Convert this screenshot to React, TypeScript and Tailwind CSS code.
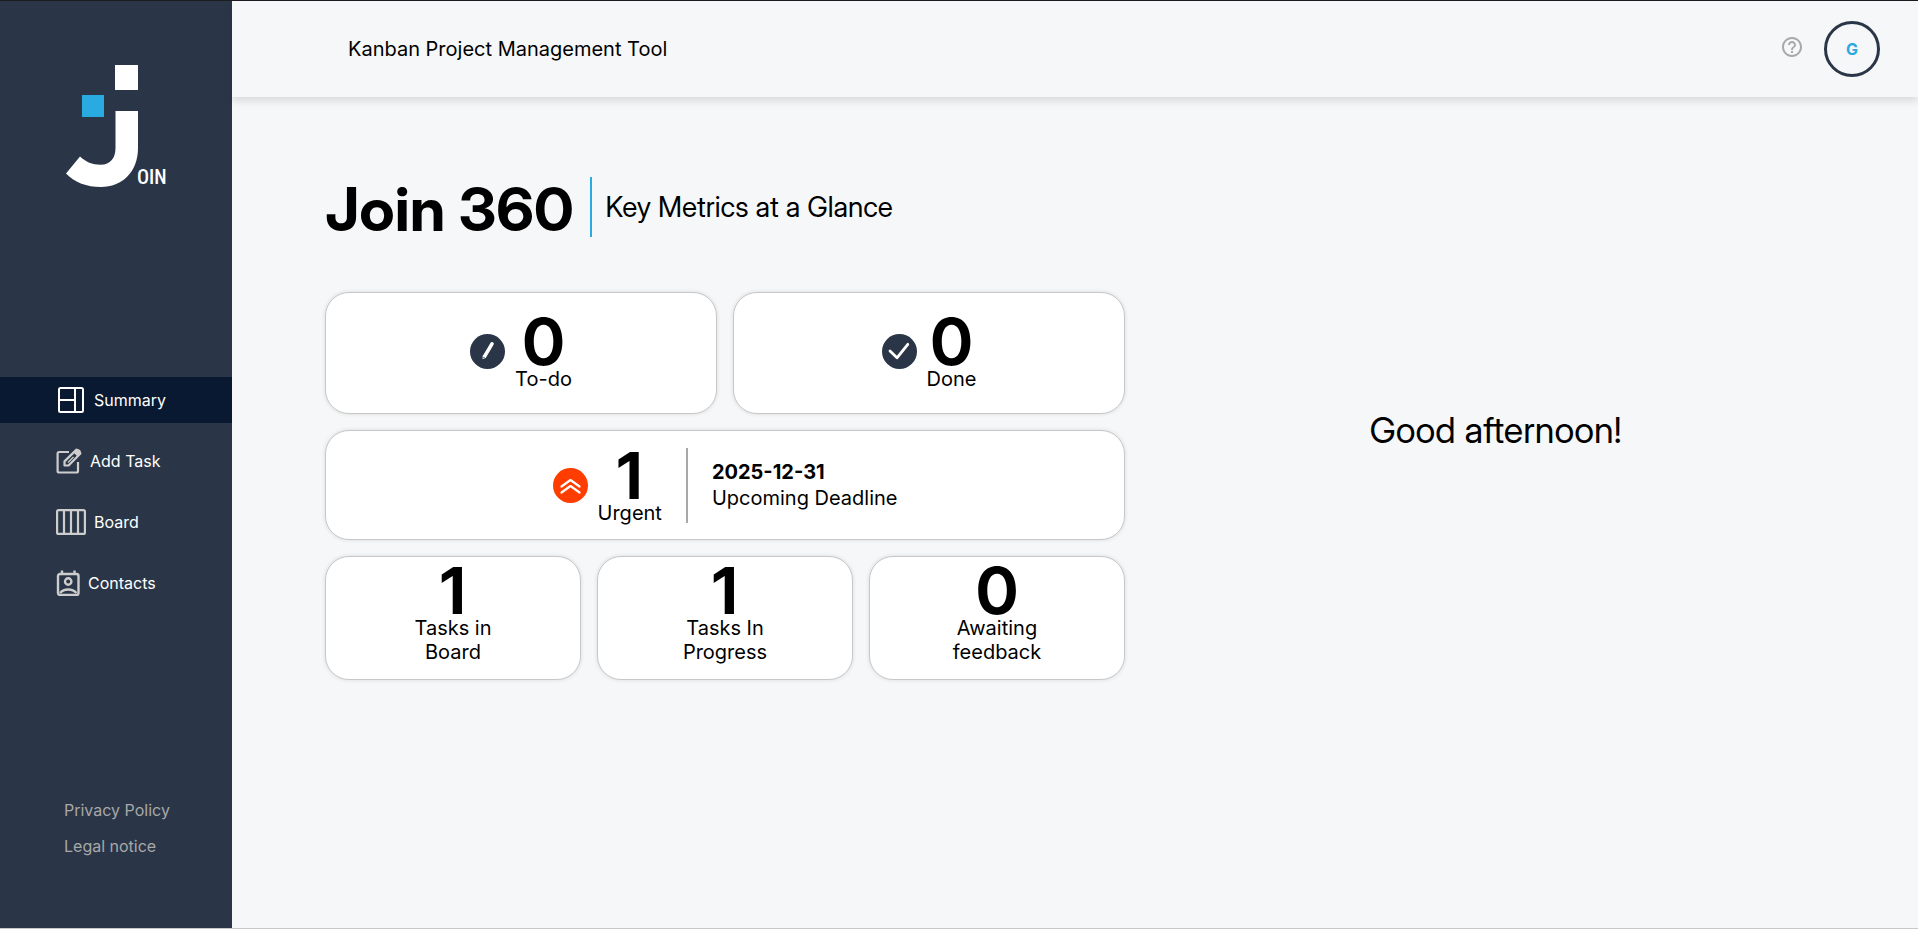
import type { ReactNode } from "react";

function Logo() {
  return (
    <svg width="104" height="124" viewBox="65 64 104 124" role="img" aria-label="Join">
      <rect x="115" y="65" width="23" height="25" fill="#fff" />
      <rect x="82" y="95" width="22" height="22" fill="#29abe2" />
      <path
        d="M115.5 111H138V148C138 172 122 187 101 187C86.500 187 75 182.500 66 173.500L80 156.500C86 162 92 164.700 100.500 164.700C110.500 164.700 115.500 158 115.500 148Z"
        fill="#fff"
      />
      <text x="137" y="184" fill="#fff" className="font-['Roboto_Condensed','Roboto',sans-serif] text-[20px] font-medium">
        OIN
      </text>
    </svg>
  );
}

function SummaryIcon() {
  return (
    <svg width="26" height="26" viewBox="0 0 26 26" fill="none" stroke="#fff" strokeWidth="2">
      <rect x="1" y="1" width="24" height="24" rx="1.500" />
      <path d="M17 1V25M1 13H17" />
    </svg>
  );
}

function AddTaskIcon() {
  return (
    <svg width="26" height="26" viewBox="0 0 26 26" fill="none" stroke="#cdcdcd" strokeWidth="2.200">
      <path d="M13 4H3.200Q1.600 4 1.600 5.600V23Q1.600 24.500 3.200 24.500H20.400Q22 24.500 22 23V14" />
      <path d="M8.500 17.500V13.400L20.500 1.600L24.400 5.500L12.600 17.500Z" strokeLinejoin="round" />
      <path d="M17.500 4.500L20.500 1.500Q22 .3 23.500 1.800L24.500 2.800Q25.800 4.200 24.500 5.500L21.500 8.500Z" fill="#cdcdcd" stroke="none" />
      <path d="M12 14.500L17.500 9" strokeWidth="1.200" />
    </svg>
  );
}

function BoardIcon() {
  return (
    <svg width="30" height="26" viewBox="0 0 30 26" fill="none" stroke="#cdcdcd" strokeWidth="2.200">
      <rect x="1.100" y="1.100" width="27.800" height="23.800" rx="1.500" />
      <path d="M8 1V25M15 1V25M22 1V25" />
    </svg>
  );
}

function ContactsIcon() {
  return (
    <svg width="24" height="26" viewBox="0 0 24 26" fill="none" stroke="#cdcdcd" strokeWidth="2.400">
      <rect x="2" y="4" width="20.500" height="21" rx="2" />
      <path d="M6 .5V4M18.500 .5V4" />
      <circle cx="12.200" cy="11.500" r="3.200" />
      <path d="M4 23Q7 19.500 12.200 19.500T20.500 23" />
    </svg>
  );
}

function HelpIcon() {
  return (
    <svg width="24" height="24" viewBox="0 0 24 24" fill="#a8a8a8">
      <path d="M11 18h2v-2h-2v2zm1-16C6.480 2 2 6.480 2 12s4.480 10 10 10 10-4.480 10-10S17.520 2 12 2zm0 18c-4.410 0-8-3.590-8-8s3.590-8 8-8 8 3.590 8 8-3.590 8-8 8zm0-14c-2.210 0-4 1.790-4 4h2c0-1.100.9-2 2-2s2 .9 2 2c0 2-3 1.750-3 5h2c0-2.250 3-2.500 3-5 0-2.210-1.790-4-4-4z" />
    </svg>
  );
}

function PencilBadge() {
  return (
    <svg width="35" height="35" viewBox="0 0 35 35">
      <circle cx="17.500" cy="17.500" r="17.500" fill="#2a3647" />
      <path d="M22 9.800L14.600 22.400" stroke="#fff" strokeWidth="3.600" strokeLinecap="round" />
      <path d="M12.800 21.300L16.200 23.300L12.600 25.300Z" fill="#fff" />
      <circle cx="14" cy="23.400" r=".6" fill="#2a3647" />
    </svg>
  );
}

function CheckBadge() {
  return (
    <svg width="35" height="35" viewBox="0 0 35 35">
      <circle cx="17.500" cy="17.500" r="17.500" fill="#2a3647" />
      <path
        d="M8 17L15 23.800L25.800 10.300"
        fill="none"
        stroke="#fff"
        strokeWidth="2.800"
        strokeLinecap="round"
        strokeLinejoin="round"
      />
    </svg>
  );
}

function UrgentBadge() {
  return (
    <svg width="35" height="35" viewBox="0 0 35 35">
      <circle cx="17.500" cy="17.500" r="17.500" fill="#ff3d00" />
      <path
        d="M8.500 18.500L17.500 12L26.500 18.500M8.500 24.500L17.500 18L26.500 24.500"
        fill="none"
        stroke="#fff"
        strokeWidth="2.200"
        strokeLinecap="round"
        strokeLinejoin="round"
      />
    </svg>
  );
}

function NavItem({ icon, label, active = false }: { icon: ReactNode; label: string; active?: boolean }) {
  return (
    <a
      href="#"
      aria-current={active ? "page" : undefined}
      className={
        active
          ? "flex h-[46px] items-center gap-2.5 bg-[#091931] pl-[58px]"
          : "flex h-[46px] items-center gap-2 pl-14"
      }
    >
      {icon}
      <span>{label}</span>
    </a>
  );
}

function Metric({ value, label }: { value: number; label: string }) {
  return (
    <div className="flex flex-col items-center text-center">
      <span className="font-['Inter_Display','Inter',sans-serif] text-[64px] leading-[51px] font-bold">{value}</span>
      <span className="text-xl leading-6">{label}</span>
    </div>
  );
}

function Card({ className, children }: { className: string; children: ReactNode }) {
  return (
    <button
      type="button"
      className={`flex justify-center rounded-3xl border border-[#c8c8c8] bg-white shadow-[0_0_4px_rgba(0,0,0,0.12)] ${className}`}
    >
      {children}
    </button>
  );
}

export default function App() {
  return (
    <div className="flex min-h-screen border-t border-b border-t-[#1c1b22] border-b-[#c8c8c8] bg-[#f6f7f8] font-['Inter_Variable','Inter',sans-serif] text-black">
      <aside className="flex w-[232px] shrink-0 flex-col bg-[#2a3647] text-base leading-5 text-white">
        <div className="pt-[63px] pl-[65px]">
          <Logo />
        </div>
        <nav className="mt-[189px] flex flex-col gap-[15px]">
          <NavItem icon={<SummaryIcon />} label="Summary" active />
          <NavItem icon={<AddTaskIcon />} label="Add Task" />
          <NavItem icon={<BoardIcon />} label="Board" />
          <NavItem icon={<ContactsIcon />} label="Contacts" />
        </nav>
        <div className="mt-auto flex flex-col gap-4 pb-[72px] pl-16 text-[#a8a8a8]">
          <a href="#">Privacy Policy</a>
          <a href="#">Legal notice</a>
        </div>
      </aside>

      <div className="flex grow flex-col">
        <header className="flex h-24 items-center justify-between pr-[38px] pl-[116px] shadow-[0_4px_8px_rgba(0,0,0,0.12)]">
          <span className="text-xl leading-6">Kanban Project Management Tool</span>
          <div className="flex items-center gap-5">
            <a href="#" aria-label="Help" className="pb-1">
              <HelpIcon />
            </a>
            <button
              type="button"
              className="size-14 rounded-full border-3 border-[#2a3647] text-base font-bold text-[#29abe2]"
            >
              G
            </button>
          </div>
        </header>

        <main className="flex items-start pt-20 pr-[52px] pl-[93px]">
          <section className="w-[800px] shrink-0">
            <div className="flex h-[60px] items-center font-['Inter_Display','Inter',sans-serif]">
              <h1 className="pt-1 text-[61px] leading-[60px] font-bold">Join 360</h1>
              <div className="ml-4 h-full w-0.5 bg-[#29abe2]" />
              <h2 className="ml-[14px] text-[28px] leading-8">Key Metrics at a Glance</h2>
            </div>

            <div className="mt-[55px] flex flex-col gap-4">
              <div className="grid grid-cols-2 gap-4">
                <Card className="h-[122px] items-center gap-[10px]">
                  <div className="pb-1">
                    <PencilBadge />
                  </div>
                  <Metric value={0} label="To-do" />
                </Card>
                <Card className="h-[122px] items-center gap-[10px]">
                  <div className="pb-1">
                    <CheckBadge />
                  </div>
                  <Metric value={0} label="Done" />
                </Card>
              </div>

              <Card className="h-[110px] items-center">
                <UrgentBadge />
                <div className="ml-[10px] pt-1">
                  <Metric value={1} label="Urgent" />
                </div>
                <div className="ml-6 h-[75px] w-0.5 bg-[#a8a8a8]" />
                <div className="ml-6 flex flex-col gap-0.5 text-left text-xl leading-6">
                  <span className="font-bold">2025-12-31</span>
                  <span>Upcoming Deadline</span>
                </div>
              </Card>

              <div className="grid grid-cols-3 gap-4">
                <Card className="h-[124px] items-start px-20 pt-2">
                  <Metric value={1} label="Tasks in Board" />
                </Card>
                <Card className="h-[124px] items-start px-20 pt-2">
                  <Metric value={1} label="Tasks In Progress" />
                </Card>
                <Card className="h-[124px] items-start px-20 pt-2">
                  <Metric value={0} label="Awaiting feedback" />
                </Card>
              </div>
            </div>
          </section>

          <p className="grow pt-[230px] text-center font-['Inter_Display','Inter',sans-serif] text-[36px] leading-[46px]">
            Good afternoon!
          </p>
        </main>
      </div>
    </div>
  );
}
